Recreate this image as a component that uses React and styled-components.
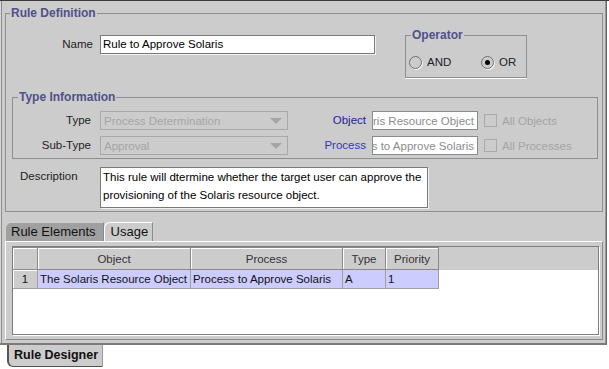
import React from 'react';
import styled, { createGlobalStyle } from 'styled-components';

const GlobalStyle = createGlobalStyle`
  html, body {
    margin: 0;
    padding: 0;
    background: #fff;
  }
  body {
    font-family: "Liberation Sans", Arial, sans-serif;
    font-size: 11.5px;
    color: #000;
  }
  * { box-sizing: border-box; }
`;

const Page = styled.div`
  width: 609px;
  height: 369px;
  border-top: 1px solid #3a3a3a;
  display: flex;
  flex-direction: column;
  background: #fff;
`;

const Window = styled.div`
  width: 607px;
  height: 344px;
  background: #ccc;
  border-right: 1px solid #666;
  border-bottom: 2px solid #7a7a7a;
  box-shadow: inset 1px 0 #d8d8d8, inset 2px 0 #8c8c8c, inset -1px 0 #999;
  padding: 12px 3px 0 5px;
  display: flex;
  flex-direction: column;
`;

const Group = styled.div`
  border: 1px solid #8f8f8f;
  display: flex;
  flex-direction: column;
  margin: ${p => p.$margin || '0'};
  padding: ${p => p.$pad || '0'};
  width: ${p => (p.$width ? `${p.$width}px` : 'auto')};
  box-shadow: ${p => (p.$etched ? '0 1px 0 #fff' : 'none')};
`;

const GroupTitle = styled.div`
  align-self: flex-start;
  margin: -8px 0 0 ${p => p.$indent}px;
  padding: 0 1px;
  height: 14px;
  line-height: 14px;
  background: #ccc;
  color: #50508a;
  font-weight: bold;
  font-size: 12px;
`;

const TopRow = styled.div`
  display: flex;
  align-items: flex-start;
  margin-top: 15px;
`;

const FieldLabel = styled.div`
  width: ${p => p.$width}px;
  margin-left: ${p => p.$left || 0}px;
  margin-right: ${p => p.$right || 0}px;
  text-align: ${p => p.$align || 'right'};
  line-height: ${p => p.$lh || 19}px;
  color: ${p => p.$color || '#222'};
  white-space: nowrap;
  flex-shrink: 0;
`;

const TextField = styled.div`
  width: ${p => p.$width}px;
  height: 19px;
  background: #fff;
  border: 1px solid #7a7a7a;
  box-shadow: 1px 1px 0 #f0f0f0;
  padding: 0 2px;
  line-height: 17px;
  white-space: nowrap;
  overflow: hidden;
`;

const RadioRow = styled.div`
  display: flex;
  align-items: center;
  height: 14px;
  margin: 13px 0 8px 3px;
`;

const RadioOption = styled.div`
  display: flex;
  align-items: center;
  width: ${p => (p.$width ? `${p.$width}px` : 'auto')};
  color: #222;
`;

const RadioCircle = styled.span`
  width: 13px;
  height: 13px;
  border-radius: 50%;
  border: 1px solid #6e6e6e;
  box-shadow: 1px 1px 0 #f4f4f4;
  background: #ccc;
  margin-right: 5px;
  display: flex;
  align-items: center;
  justify-content: center;
  &::after {
    content: '';
    width: 5px;
    height: 5px;
    border-radius: 50%;
    background: ${p => (p.$checked ? '#000' : 'transparent')};
  }
`;

const TypeRow = styled.div`
  display: flex;
  align-items: center;
  height: 19px;
  margin-top: ${p => p.$top}px;
`;

const Combo = styled.div`
  width: 188px;
  height: 19px;
  border: 1px solid #a9a9a9;
  background: #ccc;
  color: #a6a6a6;
  padding: 0 5px 0 3px;
  display: flex;
  align-items: center;
  justify-content: space-between;
  white-space: nowrap;
`;

const ComboArrow = styled.span`
  width: 0;
  height: 0;
  border-left: 6px solid transparent;
  border-right: 6px solid transparent;
  border-top: 6px solid #a4a4a4;
`;

const ReadField = styled.div`
  width: 106px;
  height: 19px;
  background: #fff;
  border: 1px solid #8a8a8a;
  color: #8c8c8c;
  padding-right: 3px;
  display: flex;
  justify-content: flex-end;
  align-items: center;
  overflow: hidden;
  white-space: nowrap;
`;

const CheckBox = styled.span`
  width: 13px;
  height: 13px;
  border: 1px solid #aaa;
  background: #ccc;
  margin: 0 5px 0 6px;
  flex-shrink: 0;
`;

const DisabledText = styled.span`
  color: #a4a4a4;
  white-space: nowrap;
`;

const DescRow = styled.div`
  display: flex;
  align-items: flex-start;
  margin-top: 8px;
`;

const TextArea = styled.div`
  width: 328px;
  height: 41px;
  background: #fff;
  border: 1px solid #7a7a7a;
  box-shadow: 1px 1px 0 #f0f0f0;
  padding: 0 2px;
  line-height: 18px;
`;

const Tabs = styled.div`
  flex: 1;
  display: flex;
  flex-direction: column;
  margin: 10px 0 3px 0;
`;

const TabStrip = styled.div`
  display: flex;
  height: 19px;
`;

const Tab = styled.div`
  height: 19px;
  padding: 0 ${p => p.$padR}px 0 ${p => p.$padL}px;
  line-height: 18px;
  font-size: 13px;
  background: ${p => (p.$dark ? '#a0a0a0' : '#ccc')};
  border-top: 1px solid ${p => (p.$dark ? '#d0d0d0' : '#fff')};
  border-left: 1px solid ${p => (p.$dark ? '#d0d0d0' : '#fff')};
  border-right: 1px solid #8a8a8a;
  border-top-left-radius: 6px;
  color: #111;
`;

const TabBody = styled.div`
  flex: 1;
  display: flex;
  border-top: 1px solid #fff;
  border-left: 1px solid #fff;
  border-right: 1px solid #8a8a8a;
  border-bottom: 1px solid #8a8a8a;
  padding: 4px 3px 4px 6px;
`;

const ScrollPane = styled.div`
  flex: 1;
  border: 1px solid #7e7e7e;
  box-shadow: 1px 1px 0 #fff;
  background: #fff;
  display: flex;
  flex-direction: column;
`;

const HeaderBar = styled.div`
  display: flex;
  height: 23px;
  background: #ccc;
`;

const HeadCell = styled.div`
  width: ${p => p.$width}px;
  height: 23px;
  line-height: 22px;
  text-align: center;
  border-right: 1px solid #8a8a8a;
  border-bottom: 1px solid #8a8a8a;
  border-top: 1px solid #8a8a8a;
  box-shadow: inset 1px 1px 0 #fff;
  color: #333;
`;

const BodyRow = styled.div`
  display: flex;
  height: 19px;
`;

const Cell = styled.div`
  width: ${p => p.$width}px;
  height: 19px;
  line-height: 18px;
  padding: 0 2px;
  background: ${p => (p.$head ? '#ccc' : '#ccccff')};
  border-right: 1px solid #a0a0a0;
  border-bottom: 1px solid #a0a0a0;
  box-shadow: ${p => (p.$head ? 'inset 1px 1px 0 #fff' : 'none')};
  text-align: ${p => (p.$head ? 'center' : 'left')};
  white-space: nowrap;
  overflow: hidden;
  color: #111;
`;

const BottomTabs = styled.div`
  display: flex;
  padding-left: 7px;
`;

const BottomTab = styled.div`
  width: 96px;
  height: 22px;
  background: #ccc;
  border-left: 2px solid #555;
  border-right: 1px solid #999;
  border-bottom: 1px solid #555;
  border-bottom-left-radius: 6px;
  padding-left: 5px;
  line-height: 21px;
  font-weight: bold;
  font-size: 12.5px;
  color: #111;
`;

const columns = [
  { key: 'num', width: 25, label: '' },
  { key: 'object', width: 153, label: 'Object' },
  { key: 'process', width: 152, label: 'Process' },
  { key: 'type', width: 43, label: 'Type' },
  { key: 'priority', width: 53, label: 'Priority' },
];

const rows = [
  { num: '1', object: 'The Solaris Resource Object', process: 'Process to Approve Solaris', type: 'A', priority: '1' },
];

export default function App() {
  return (
    <Page>
      <GlobalStyle />
      <Window>
        <Group $pad="0 0 3px 0">
          <GroupTitle $indent={4}>Rule Definition</GroupTitle>
          <TopRow>
            <FieldLabel $width={87} $right={7}>Name</FieldLabel>
            <TextField $width={275}>Rule to Approve Solaris</TextField>
            <Group $margin="0 0 0 30px" $width={122} $etched>
              <GroupTitle $indent={5}>Operator</GroupTitle>
              <RadioRow>
                <RadioOption $width={72}>
                  <RadioCircle />
                  AND
                </RadioOption>
                <RadioOption>
                  <RadioCircle $checked />
                  OR
                </RadioOption>
              </RadioRow>
            </Group>
          </TopRow>

          <Group $margin="19px 4px 0 6px" $pad="0 0 3px 0">
            <GroupTitle $indent={5}>Type Information</GroupTitle>
            <TypeRow $top={7}>
              <FieldLabel $width={78} $right={9}>Type</FieldLabel>
              <Combo>Process Determination<ComboArrow /></Combo>
              <FieldLabel $width={78} $right={6} $color="#22229a">Object</FieldLabel>
              <ReadField>The Solaris Resource Object</ReadField>
              <CheckBox />
              <DisabledText>All Objects</DisabledText>
            </TypeRow>
            <TypeRow $top={6}>
              <FieldLabel $width={78} $right={9}>Sub-Type</FieldLabel>
              <Combo>Approval<ComboArrow /></Combo>
              <FieldLabel $width={78} $right={6} $color="#3535c8">Process</FieldLabel>
              <ReadField>Process to Approve Solaris</ReadField>
              <CheckBox />
              <DisabledText>All Processes</DisabledText>
            </TypeRow>
          </Group>

          <DescRow>
            <FieldLabel $width={80} $left={14} $align="left" $lh={18}>Description</FieldLabel>
            <TextArea>
              This rule will dtermine whether the target user can approve the provisioning of the Solaris resource object.
            </TextArea>
          </DescRow>
        </Group>

        <Tabs>
          <TabStrip>
            <Tab $dark $padL={5} $padR={7}>Rule Elements</Tab>
            <Tab $padL={6} $padR={4}>Usage</Tab>
          </TabStrip>
          <TabBody>
            <ScrollPane>
              <HeaderBar>
                {columns.map(c => (
                  <HeadCell key={c.key} $width={c.width}>{c.label}</HeadCell>
                ))}
              </HeaderBar>
              {rows.map(r => (
                <BodyRow key={r.num}>
                  {columns.map(c => (
                    <Cell key={c.key} $width={c.width} $head={c.key === 'num'}>{r[c.key]}</Cell>
                  ))}
                </BodyRow>
              ))}
            </ScrollPane>
          </TabBody>
        </Tabs>
      </Window>
      <BottomTabs>
        <BottomTab>Rule Designer</BottomTab>
      </BottomTabs>
    </Page>
  );
}
